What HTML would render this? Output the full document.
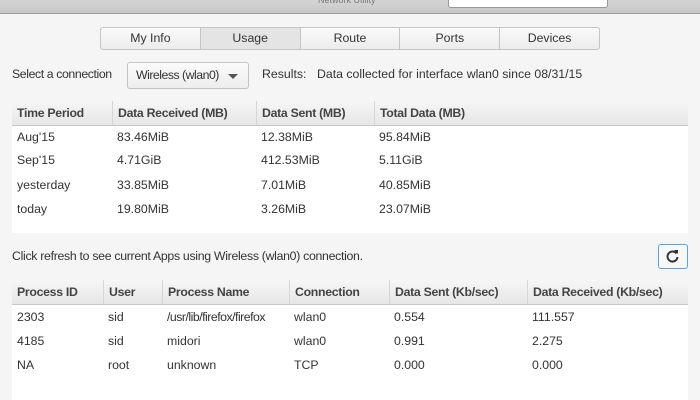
<!DOCTYPE html>
<html><head><style>
*{box-sizing:border-box;margin:0;padding:0}
body{width:700px;height:400px;overflow:hidden;background:#f5f5f5;font-family:"Liberation Sans Narrow","Liberation Sans",sans-serif;font-size:12.3px;color:#333;position:relative}
.tb{position:absolute;left:0;top:0;width:700px;height:14px;background:linear-gradient(#d4d4d4,#c8c8c8);border-bottom:1px solid #9a9a9a}
.tb .t{position:absolute;left:318px;top:-5px;font-size:9px;color:#777}
.tb .s{position:absolute;left:448px;top:-2px;width:160px;height:10px;background:#fff;border:1px solid #999;border-radius:3px}
.tabs{position:absolute;left:100px;top:27px;height:23px;width:500px;display:flex;border:1px solid #c4c4c4;border-radius:3px;background:linear-gradient(#fafafa,#ececec)}
.tabs div{flex:1;text-align:center;line-height:21px;border-right:1px solid #c4c4c4}
.tabs div:last-child{border-right:none}
.tabs .a{background:#e4e4e4}
.abs{position:absolute;white-space:nowrap}
.dd{position:absolute;left:127px;top:62px;width:122px;height:27px;border:1px solid #c4c4c4;border-radius:3px;background:linear-gradient(#fbfbfb,#ededed);line-height:25px;padding-left:8px;letter-spacing:-0.5px}
.dd:after{content:"";position:absolute;right:10px;top:11px;border:5px solid transparent;border-top:5px solid #555}
.tbl{position:absolute;left:12px;background:#fff}
.hd{position:absolute;left:0;top:0;height:25px;width:100%;background:linear-gradient(#f6f6f6,#e6e6e6);border-bottom:1px solid #c8c8c8}
.h{position:absolute;top:0;height:24px;line-height:24px;font-weight:bold;color:#444;padding-left:5px;border-left:1px solid #d6d6d6;letter-spacing:-0.3px}
.c{position:absolute;padding-left:5px;white-space:nowrap}
.rb{position:absolute;left:658px;top:244px;width:30px;height:25px;border:1px solid #5aa2e0;border-radius:3px;background:#f8f8f8}
</style></head><body>
<div class="tb"><span class="t">Network Utility</span><div class="s"></div></div>
<div class="tabs"><div>My Info</div><div class="a">Usage</div><div>Route</div><div>Ports</div><div>Devices</div></div>
<div class="abs" style="left:12px;top:67px;letter-spacing:-0.4px">Select a connection</div>
<div class="dd">Wireless (wlan0)</div>
<div class="abs" style="left:262px;top:67px">Results:</div>
<div class="abs" style="left:317px;top:67px">Data collected for interface wlan0 since 08/31/15</div>

<div class="tbl" style="top:101px;width:676px;height:132px">
<div class="hd"></div>
<div class="h" style="left:0;border:none">Time Period</div>
<div class="h" style="left:100px">Data Received (MB)</div>
<div class="h" style="left:244px">Data Sent (MB)</div>
<div class="h" style="left:362px">Total Data (MB)</div>
<div class="c" style="left:0;top:29px">Aug'15</div><div class="c" style="left:100px;top:29px">83.46MiB</div><div class="c" style="left:244px;top:29px">12.38MiB</div><div class="c" style="left:362px;top:29px">95.84MiB</div>
<div class="c" style="left:0;top:52px">Sep'15</div><div class="c" style="left:100px;top:52px">4.71GiB</div><div class="c" style="left:244px;top:52px">412.53MiB</div><div class="c" style="left:362px;top:52px">5.11GiB</div>
<div class="c" style="left:0;top:77px">yesterday</div><div class="c" style="left:100px;top:77px">33.85MiB</div><div class="c" style="left:244px;top:77px">7.01MiB</div><div class="c" style="left:362px;top:77px">40.85MiB</div>
<div class="c" style="left:0;top:101px">today</div><div class="c" style="left:100px;top:101px">19.80MiB</div><div class="c" style="left:244px;top:101px">3.26MiB</div><div class="c" style="left:362px;top:101px">23.07MiB</div>
</div>

<div class="abs" style="left:12px;top:249px;letter-spacing:-0.3px">Click refresh to see current Apps using Wireless (wlan0) connection.</div>
<div class="rb"><svg width="28" height="23" viewBox="0 0 28 23"><path d="M17.5 8.5 A5 5 0 1 0 18.5 12" fill="none" stroke="#333" stroke-width="2"/><path d="M15 5 L19 5 L19 9 Z" fill="#333"/></svg></div>

<div class="tbl" style="top:280px;width:676px;height:120px">
<div class="hd"></div>
<div class="h" style="left:0;border:none">Process ID</div>
<div class="h" style="left:91px">User</div>
<div class="h" style="left:150px">Process Name</div>
<div class="h" style="left:277px">Connection</div>
<div class="h" style="left:377px">Data Sent (Kb/sec)</div>
<div class="h" style="left:515px">Data Received (Kb/sec)</div>
<div class="c" style="left:0;top:30px">2303</div><div class="c" style="left:91px;top:30px">sid</div><div class="c" style="left:150px;top:30px;letter-spacing:-0.5px">/usr/lib/firefox/firefox</div><div class="c" style="left:277px;top:30px">wlan0</div><div class="c" style="left:377px;top:30px">0.554</div><div class="c" style="left:515px;top:30px">111.557</div>
<div class="c" style="left:0;top:54px">4185</div><div class="c" style="left:91px;top:54px">sid</div><div class="c" style="left:150px;top:54px">midori</div><div class="c" style="left:277px;top:54px">wlan0</div><div class="c" style="left:377px;top:54px">0.991</div><div class="c" style="left:515px;top:54px">2.275</div>
<div class="c" style="left:0;top:78px">NA</div><div class="c" style="left:91px;top:78px">root</div><div class="c" style="left:150px;top:78px">unknown</div><div class="c" style="left:277px;top:78px">TCP</div><div class="c" style="left:377px;top:78px">0.000</div><div class="c" style="left:515px;top:78px">0.000</div>
</div>
</body></html>
